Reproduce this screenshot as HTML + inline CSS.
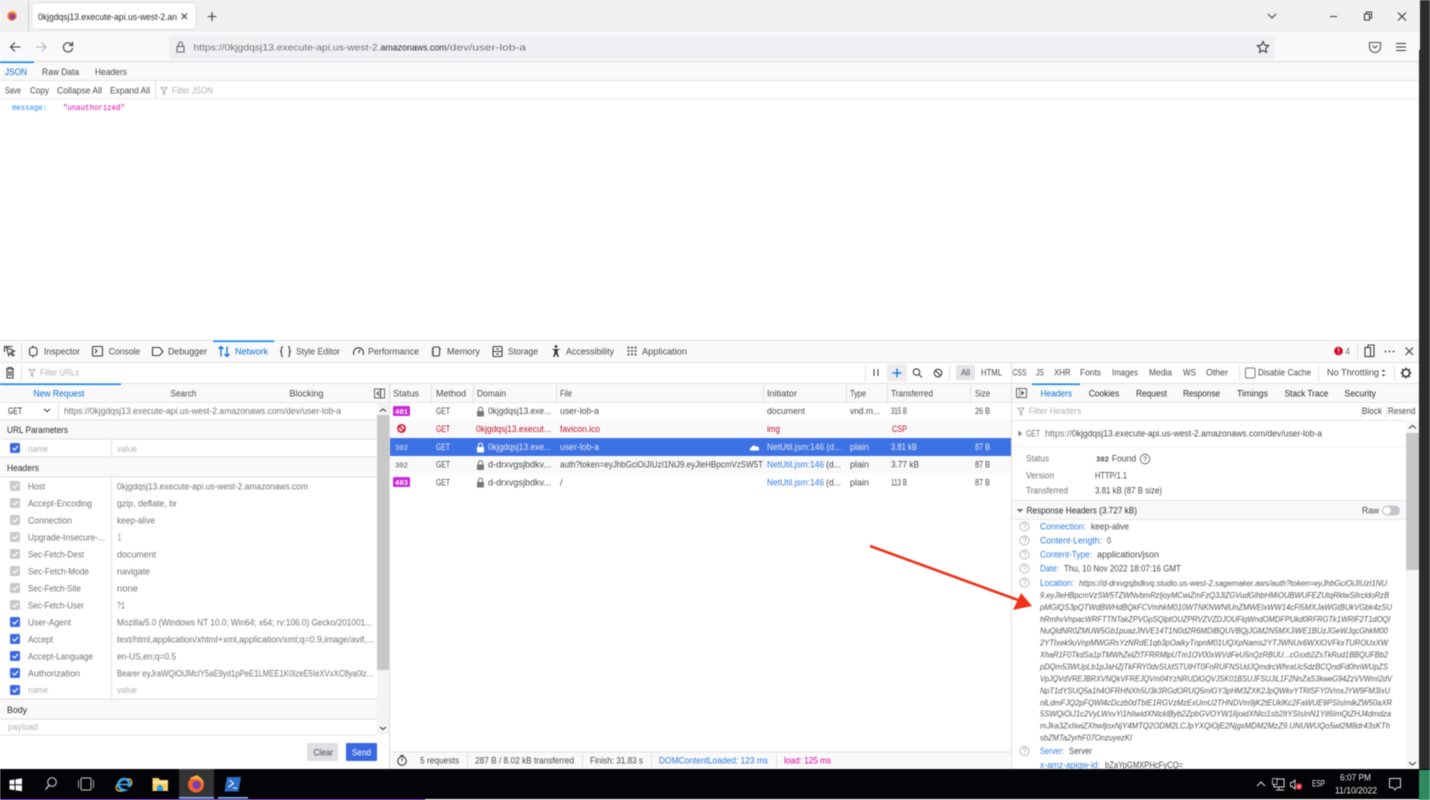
<!DOCTYPE html>
<html><head><meta charset="utf-8"><title>0kjgdqsj13.execute-api.us-west-2.amazonaws.com</title>
<style>
html,body{margin:0;padding:0;background:#fff;width:1430px;height:800px;overflow:hidden}
svg{display:block;position:absolute;left:0;top:0;filter:blur(.4px)}
text{font-family:"Liberation Sans",sans-serif;font-size:9px;fill:#4a4a4f;white-space:pre}
.m{font-family:"Liberation Mono",monospace;font-size:8.5px}
.d{fill:#2b2b30}.g{fill:#737373}.p{fill:#b1b1b3}.b{fill:#2f7de0}.r{fill:#c4132a}.w{fill:#fff}.k{fill:#e8e8e8}
.i{font-style:italic;fill:#55555a;font-size:8.6px}
.s{stroke:#3c3c40;stroke-width:1.1;fill:none}
.l{stroke:#e0e0e2;stroke-width:1;fill:none}
</style></head><body>
<svg width="1430" height="800" viewBox="0 0 1430 800" xmlns="http://www.w3.org/2000/svg">
<rect width="1430" height="800" fill="#fff"/>
<!-- tab bar -->
<rect width="1420" height="32" fill="#f0f0f0"/>
<circle cx="12" cy="16" r="4.6" fill="#f0642c"/><circle cx="12.4" cy="16.6" r="2.5" fill="#7a3fb5"/><path d="M10 12c2-2 5-1 6 1l-3 0z" fill="#fbb32e"/>
<path d="M28.5 0v32" stroke="#cfcfcf"/>
<rect x="32" y="3" width="164" height="26" rx="3" fill="#fff" stroke="#dcdcdc" stroke-width=".7"/>
<text x="38" y="20" textLength="139" class="d">0kjgdqsj13.execute-api.us-west-2.an</text>
<path d="M181.500 13.500l5.500 5.500m0-5.500l-5.500 5.500M212 12v9m-4.500-4.500h9" class="s"/>
<path d="M1268 14l4 4 4-4M1330 16.500h7M1398 12.500l8 8m0-8l-8 8" class="s" stroke-width=".9"/>
<path d="M1364.500 14h5v6h-5zM1366.500 14v-2h5v6h-2" class="s"/>
<!-- nav bar -->
<rect y="32" width="1420" height="29" fill="#f9f9fb"/>
<rect y="61" width="1420" height="1" fill="#dcdcde"/>
<path d="M10.500 47h10M15 42.500l-4.500 4.500 4.500 4.500" class="s"/>
<path d="M36 47h10M41.500 42.500l4.500 4.500-4.500 4.500" class="s" style="stroke:#b4b4b8"/>
<path d="M72 45a4.600 4.600 0 1 0 .6 3M72.600 41.800v3.600h-3.600" class="s"/>
<rect x="169" y="35" width="1106" height="24" rx="3" fill="#f0f0f4"/>
<path d="M177 46.500h7v5.500h-7zM178.500 46.500v-2.500a2 2 0 0 1 4 0v2.500" class="s" style="stroke:#66666a"/>
<text x="193.500" y="50.500" textLength="187" class="g">https://0kjgdqsj13.execute-api.us-west-2.</text>
<text x="380.500" y="50.500" textLength="66" class="d">amazonaws.com</text>
<text x="446.500" y="50.500" textLength="79.500" class="g">/dev/user-lob-a</text>
<path d="M1263 41.500l1.700 3.700 4 .5-3 2.700.8 4-3.500-2-3.500 2 .8-4-3-2.700 4-.5z" class="s"/>
<path d="M1369.500 42.500h11v4.500a5.500 5.500 0 0 1-11 0z" class="s" style="stroke:#555"/><path d="M1372.500 45.500l2.500 2.500 2.500-2.500" class="s" style="stroke:#555"/>
<path d="M1396 43.500h10M1396 47h10M1396 50.500h10" class="s"/>
<!-- json tabs -->
<rect y="62" width="1420" height="18" fill="#f9f9fa"/>
<rect y="61.500" width="34" height="1.500" fill="#0a84ff"/>
<rect y="80" width="1420" height="1" fill="#e4e4e6"/>
<text x="5" y="75" textLength="22" style="fill:#0a6fd8">JSON</text>
<text x="42" y="75" textLength="37">Raw Data</text>
<text x="95" y="75" textLength="32">Headers</text>
<text x="5" y="93.500" textLength="16">Save</text>
<text x="30" y="93.500" textLength="19">Copy</text>
<text x="57" y="93.500" textLength="45">Collapse All</text>
<text x="110" y="93.500" textLength="40">Expand All</text>
<path d="M155.500 81v17" class="l"/>
<path d="M161 87.500h6l-2.200 3v4l-1.600-1v-3z" class="s" style="stroke:#9a9a9e;stroke-width:.8"/>
<text x="172" y="93.500" textLength="41" class="p">Filter JSON</text>
<rect y="98" width="1420" height="1.300" fill="#ededf0"/>
<text x="12" y="110" textLength="35" class="m" style="fill:#1f8bf0">message:</text>
<text x="63" y="110" textLength="62" class="m" style="fill:#dd00a9">"unauthorized"</text>
<!-- right dark strip -->
<rect x="1420" width="10" height="770" fill="#2c2c2c"/><rect x="1419" y="50" width="1" height="720" fill="#2c2c2c"/>
<!-- devtools top -->
<rect y="340" width="1419" height="1" fill="#e0e0e2"/>
<rect y="341" width="1419" height="21" fill="#f9f9fa"/>
<rect y="362" width="1419" height="1" fill="#e0e0e2"/>
<rect y="383" width="1419" height="1" fill="#e0e0e2"/>
<rect y="384" width="1419" height="18" fill="#f9f9fa"/>
<rect y="402" width="1419" height="1" fill="#e6e6e8"/>
<rect x="213" y="340.500" width="61" height="1.500" fill="#0a84ff"/>
<path d="M4.500 352v-5.500h8M6.500 347.500l8 3.500-3 1 2.500 3-1.300 1-2.500-3-1.500 2.500z" class="s"/>
<path d="M21.500 343v17" class="l"/>
<rect x="29.500" y="347.500" width="7.500" height="8" rx="2" class="s"/><path d="M33 345.500v2M33 355.500v2" class="s"/>
<text x="44" y="354.700" textLength="36">Inspector</text>
<rect x="92.500" y="346.500" width="10" height="9.500" rx="1" class="s"/><path d="M95 349l2 2-2 2" class="s" stroke-width=".8"/>
<text x="108.700" y="354.700" textLength="31.500">Console</text>
<path d="M152.500 347.500h7l3.500 4-3.500 4h-7z" class="s"/>
<text x="168" y="354.700" textLength="39">Debugger</text>
<path d="M221 356.500v-10M218.500 349l2.500-2.500 2.500 2.500M227 346.500v10M224.500 354l2.500 2.500 2.500-2.500" class="s" style="stroke:#0a6fd8;stroke-width:1.300"/>
<text x="235" y="354.700" textLength="33" style="fill:#0a6fd8">Network</text>
<path d="M283 346.500c-1.500 0-1.500 1-1.500 2v1.500c0 1-.5 1.500-1.500 1.500 1 0 1.500.5 1.500 1.500v1.500c0 1 0 2 1.500 2M288 346.500c1.500 0 1.500 1 1.500 2v1.500c0 1 .5 1.500 1.500 1.500-1 0-1.500.5-1.500 1.500v1.500c0 1 0 2-1.500 2" class="s" stroke-width="1.200"/>
<text x="296" y="354.700" textLength="44">Style Editor</text>
<path d="M354 355a5 5 0 1 1 9 0M358.500 353l1.500-3.500" class="s" stroke-width="1.200"/>
<text x="368" y="354.700" textLength="51">Performance</text>
<rect x="433" y="347" width="6.500" height="9" rx="1.500" class="s"/><path d="M431.500 349h1.500M431.500 352h1.500M431.500 355h1.500M439.500 349h1.500" class="s" stroke-width=".8"/>
<text x="447" y="354.700" textLength="33">Memory</text>
<rect x="493" y="346.500" width="9" height="10" rx="1" class="s"/><path d="M493 351.500h9M496 349h3M496 354h3" class="s" stroke-width=".8"/>
<text x="508" y="354.700" textLength="30">Storage</text>
<circle cx="556" cy="346.500" r="1.400" fill="#333"/><path d="M551.500 349h9l-3 1.500v2l1.500 4.500h-1.500l-1.500-3.500-1.500 3.500h-1.500l1.500-4.500v-2z" fill="#333"/>
<text x="566" y="354.700" textLength="48">Accessibility</text>
<path d="M627.500 347.500h2M631 347.500h2M634.500 347.500h2M627.500 351h2M631 351h2M634.500 351h2M627.500 354.500h2M631 354.500h2M634.500 354.500h2" stroke="#666" stroke-width="2" fill="none"/>
<text x="642" y="354.700" textLength="45">Application</text>
<circle cx="1338.500" cy="351" r="4.300" fill="#d70022"/><rect x="1338" y="348" width="1.100" height="3.500" fill="#fff"/><rect x="1338" y="352.300" width="1.100" height="1.100" fill="#fff"/>
<text x="1345" y="354.500" textLength="5" class="g">4</text>
<path d="M1357.500 344v15" class="l"/>
<rect x="1365" y="347.500" width="5.500" height="9" class="s"/><path d="M1368 347.500v-2.500h6v11.500h-3.500" class="s"/>
<circle cx="1385.500" cy="351.500" r=".9" fill="#333"/><circle cx="1389.500" cy="351.500" r=".9" fill="#333"/><circle cx="1393.500" cy="351.500" r=".9" fill="#333"/>
<path d="M1405.500 347.500l7.500 7.500m0-7.500l-7.500 7.500" class="s"/>
<!-- toolbar 2 -->
<path d="M6 369h8M8 369v-1.500h4v1.500M7 369.500v8.500h6v-8.500M9 371v5M11 371v5" class="s"/>
<path d="M21.500 365v16" class="l"/>
<path d="M29 369.500h6l-2.200 3v4l-1.600-1v-3z" class="s" style="stroke:#9a9a9e;stroke-width:.8"/>
<text x="40" y="375.500" textLength="39" class="p">Filter URLs</text>
<path d="M865.500 365v16M949.500 365v16" class="l"/>
<path d="M874 369v7M878 369v7" class="s" stroke-width=".8"/>
<rect x="887" y="364" width="20" height="17" fill="#ededf0"/>
<path d="M897 368.500v9M892.500 373h9" style="stroke:#0a6fd8;stroke-width:1.300;fill:none"/>
<circle cx="916.500" cy="372" r="3.200" class="s" stroke-width="1.300"/><path d="M919 374.500l3 3" class="s" stroke-width="1.300"/>
<circle cx="938" cy="373" r="3.800" class="s" stroke-width="1.200"/><path d="M935.500 370.500l5 5" class="s"/>
<rect x="956" y="365" width="19" height="15" fill="#e4e4e6"/>
<text x="961" y="375.700" textLength="9">All</text>
<text x="981" y="375.700" textLength="21">HTML</text>
<text x="1012.500" y="375.700" textLength="14">CSS</text>
<text x="1036" y="375.700" textLength="8">JS</text>
<text x="1054" y="375.700" textLength="16.500">XHR</text>
<text x="1080" y="375.700" textLength="21">Fonts</text>
<text x="1112" y="375.700" textLength="26">Images</text>
<text x="1149" y="375.700" textLength="23">Media</text>
<text x="1183" y="375.700" textLength="13">WS</text>
<text x="1206" y="375.700" textLength="22">Other</text>
<path d="M1239.500 365v16M1318.500 365v16M1394.500 365v16" class="l"/>
<rect x="1245.500" y="368" width="9.500" height="10" rx="1.500" fill="#fff" stroke="#77777c"/>
<text x="1258" y="375.700" textLength="53">Disable Cache</text>
<text x="1327" y="375.700" textLength="52">No Throttling</text>
<path d="M1381.500 371.500l2-2 2 2zM1381.500 374.500l2 2 2-2z" fill="#444"/>
<circle cx="1406" cy="373" r="3.600" fill="none" stroke="#333" stroke-width="1.500"/><path d="M1406 367.500v2M1406 376.500v2M1400.500 373h2M1409.500 373h2M1402 369l1.500 1.500M1408.500 375.500l1.500 1.500M1410 369l-1.500 1.500M1403.500 375.500l-1.500 1.500" stroke="#333" stroke-width="1.300" fill="none"/>
<!-- left panel -->
<rect y="383.500" width="121" height="1.500" fill="#0a84ff"/>
<text x="33.500" y="396.500" textLength="51" style="fill:#0a6fd8">New Request</text>
<text x="170.500" y="396.500" textLength="26">Search</text>
<text x="289.500" y="396.500" textLength="34">Blocking</text>
<rect x="374.500" y="389" width="10" height="9" fill="none" stroke="#555" stroke-width=".9"/><path d="M380.500 389v9M379 391.500l-2 2 2 2" class="s" stroke-width=".8"/>
<rect y="403" width="377" height="1" fill="#fff"/>
<text x="8" y="414" textLength="14" class="d">GET</text>
<path d="M44 409l3 2.500 3-2.500" class="s" stroke-width="1.200"/>
<path d="M58.500 403v17" class="l"/>
<text x="64" y="414" textLength="277" class="g">https://0kjgdqsj13.execute-api.us-west-2.amazonaws.com/dev/user-lob-a</text>
<rect y="420" width="377" height="19" fill="#f9f9fa"/>
<path d="M111.500 439v18M111.500 477v222" class="l"/>
<rect y="457" width="377" height="20" fill="#f9f9fa"/>
<rect y="699" width="377" height="20" fill="#f9f9fa"/>
<path d="M0 420h377M0 439h377M0 457h377M0 477h377M0 699h377M0 719h377M0 735h377" class="l"/>
<text x="7" y="433" textLength="61" class="d">URL Parameters</text>
<text x="7" y="471" textLength="32" class="d">Headers</text>
<text x="7" y="713" textLength="20" class="d">Body</text>
<text x="8" y="730" textLength="30" class="p">payload</text>
<defs><g id="cb"><rect x="10" y="-5" width="10" height="10" rx="1.500"/><path d="M12.500 0l2 2 3.500-4" stroke="#fff" stroke-width="1.200" fill="none"/></g></defs>
<g fill="#3b68e0"><use href="#cb" y="448"/><use href="#cb" y="622"/><use href="#cb" y="639"/><use href="#cb" y="656"/><use href="#cb" y="673"/><use href="#cb" y="690"/></g>
<g fill="#c9c9cc"><use href="#cb" y="486"/><use href="#cb" y="503"/><use href="#cb" y="520"/><use href="#cb" y="537"/><use href="#cb" y="554"/><use href="#cb" y="571"/><use href="#cb" y="588"/><use href="#cb" y="605"/></g>
<text x="28" y="452" textLength="20" class="p">name</text><text x="117" y="452" textLength="20" class="p">value</text>
<text x="28" y="693" textLength="20" class="p">name</text><text x="117" y="693" textLength="20" class="p">value</text>
<g class="lab">
<text x="28" y="489.500" textLength="17" class="g">Host</text><text x="117" y="489.500" textLength="191" class="g">0kjgdqsj13.execute-api.us-west-2.amazonaws.com</text>
<text x="28" y="506.500" textLength="64" class="g">Accept-Encoding</text><text x="117" y="506.500" textLength="60" class="g">gzip, deflate, br</text>
<text x="28" y="523.500" textLength="44" class="g">Connection</text><text x="117" y="523.500" textLength="38" class="g">keep-alive</text>
<text x="28" y="540.500" textLength="77" class="g">Upgrade-Insecure-...</text><text x="118" y="540.500" textLength="3" class="g">1</text>
<text x="28" y="557.500" textLength="56" class="g">Sec-Fetch-Dest</text><text x="117" y="557.500" textLength="39" class="g">document</text>
<text x="28" y="574.500" textLength="61" class="g">Sec-Fetch-Mode</text><text x="117" y="574.500" textLength="33" class="g">navigate</text>
<text x="28" y="591.500" textLength="53" class="g">Sec-Fetch-Site</text><text x="117" y="591.500" textLength="21" class="g">none</text>
<text x="28" y="608.500" textLength="56" class="g">Sec-Fetch-User</text><text x="117" y="608.500" textLength="8" class="g">?1</text>
<text x="28" y="625.500" textLength="43" class="g">User-Agent</text><text x="117" y="625.500" textLength="255" class="g">Mozilla/5.0 (Windows NT 10.0; Win64; x64; rv:106.0) Gecko/201001...</text>
<text x="28" y="642.500" textLength="25" class="g">Accept</text><text x="117" y="642.500" textLength="257" class="g">text/html,application/xhtml+xml,application/xml;q=0.9,image/avif,...</text>
<text x="28" y="659.500" textLength="65" class="g">Accept-Language</text><text x="117" y="659.500" textLength="59" class="g">en-US,en;q=0.5</text>
<text x="28" y="676.500" textLength="52" class="g">Authorization</text><text x="117" y="676.500" textLength="256" class="g">Bearer eyJraWQiOiJMclY5aE9yd1pPeE1LMEE1K0IzeE5IeXVxXC8ya0lz...</text>
</g>
<rect x="377" y="403" width="12" height="332" fill="#f4f4f4"/>
<rect x="377" y="415" width="12" height="255" fill="#c8c8c8"/>
<path d="M380 411.500l3-2.500 3 2.500M380 727l3 2.500 3-2.500" class="s" stroke-width="1.100"/>
<rect x="307" y="743" width="31" height="18" rx="1" fill="#e0e0e2"/>
<text x="313.500" y="755.500" textLength="19.500">Clear</text>
<rect x="346" y="743" width="31" height="18" rx="1" fill="#3b68e0"/>
<text x="352" y="755.500" textLength="19" class="w">Send</text>
<path d="M389.500 384v385" stroke="#dcdcde" fill="none"/>
<!-- network table -->
<path d="M431.500 385v17M473.500 385v17M556.500 385v17M763.500 385v17M846.500 385v17M887.500 385v17M970.500 385v17M1011.500 363v406" class="l"/>
<text x="393" y="396.500" textLength="26">Status</text><text x="436" y="396.500" textLength="30">Method</text><text x="477" y="396.500" textLength="29">Domain</text><text x="560" y="396.500" textLength="12">File</text><text x="767" y="396.500" textLength="30">Initiator</text><text x="850" y="396.500" textLength="16">Type</text><text x="891" y="396.500" textLength="42">Transferred</text><text x="975" y="396.500" textLength="15">Size</text>
<rect x="390" y="420" width="621" height="18" fill="#f9f9fa"/>
<rect x="390" y="456" width="621" height="17.500" fill="#f9f9fa"/>
<rect x="390" y="438" width="621" height="18" fill="#3d72e5"/>
<!-- row 1 -->
<rect x="393" y="406" width="17" height="10" rx="1.500" fill="#c926d9"/><text x="395" y="414" textLength="13" class="m w" style="font-size:7.500px;font-weight:bold">401</text>
<text x="436" y="414" textLength="14">GET</text>
<g id="lk"><rect x="477" y="411" width="7" height="5.500" rx=".7" fill="#77777c"/><path d="M478.500 411v-1.800a2 2 0 0 1 4 0v1.800" fill="none" stroke="#77777c"/></g>
<text x="488" y="414" textLength="63">0kjgdqsj13.exe...</text>
<text x="560" y="414" textLength="39">user-lob-a</text><text x="767" y="414" textLength="38">document</text><text x="850" y="414" textLength="30">vnd.m...</text><text x="891" y="414" textLength="16">315 B</text><text x="975" y="414" textLength="15">26 B</text>
<!-- row 2 -->
<circle cx="401.500" cy="428.500" r="3.600" fill="none" stroke="#d70022" stroke-width="1.500"/><path d="M399 426l5 5" stroke="#d70022" stroke-width="1.500"/>
<text x="436" y="432" textLength="14" class="r">GET</text>
<text x="476" y="432" textLength="75" class="r">0kjgdqsj13.execut...</text>
<text x="560" y="432" textLength="40" class="r">favicon.ico</text>
<text x="767" y="432" textLength="13" class="r">img</text><text x="892" y="432" textLength="15" class="r">CSP</text>
<!-- row 3 -->
<text x="395" y="450" textLength="13" class="m k" style="font-size:7.500px">302</text>
<text x="436" y="450" textLength="14" class="k">GET</text>
<rect x="477" y="447" width="7" height="5.500" rx=".7" fill="#fff"/><path d="M478.500 447v-1.800a2 2 0 0 1 4 0v1.800" fill="none" stroke="#fff"/>
<text x="488" y="450" textLength="63" class="k">0kjgdqsj13.exe...</text>
<text x="560" y="450" textLength="39" class="k">user-lob-a</text>
<path d="M751 450.500a1.500 1.500 0 0 1 .5-3 2.500 2.500 0 0 1 4.500-.8 2 2 0 0 1 3 2v1.800z" fill="#fff"/>
<text x="767" y="450" textLength="74" class="k">NetUtil.jsm:146 (d...</text><text x="850" y="450" textLength="19" class="k">plain</text><text x="891" y="450" textLength="26" class="k">3.81 kB</text><text x="975" y="450" textLength="15" class="k">87 B</text>
<!-- row 4 -->
<text x="395" y="467.500" textLength="13" class="m" style="font-size:7.500px">302</text>
<text x="436" y="467.500" textLength="14">GET</text>
<rect x="477" y="464.500" width="7" height="5.500" rx=".7" fill="#77777c"/><path d="M478.500 464.500v-1.800a2 2 0 0 1 4 0v1.800" fill="none" stroke="#77777c"/>
<text x="488" y="467.500" textLength="63">d-drxvgsjbdkv...</text>
<text x="560" y="467.500" textLength="203">auth?token=eyJhbGciOiJIUzI1NiJ9.eyJleHBpcmVzSW5T</text>
<text x="767" y="467.500" textLength="57" class="b">NetUtil.jsm:146</text><text x="826" y="467.500" textLength="15">(d...</text><text x="850" y="467.500" textLength="19">plain</text><text x="891" y="467.500" textLength="28">3.77 kB</text><text x="975" y="467.500" textLength="15">87 B</text>
<!-- row 5 -->
<rect x="393" y="477" width="17" height="10" rx="1.500" fill="#c926d9"/><text x="395" y="485" textLength="13" class="m w" style="font-size:7.500px;font-weight:bold">403</text>
<text x="436" y="485.300" textLength="14">GET</text>
<rect x="477" y="482" width="7" height="5.500" rx=".7" fill="#77777c"/><path d="M478.500 482v-1.800a2 2 0 0 1 4 0v1.800" fill="none" stroke="#77777c"/>
<text x="488" y="485.300" textLength="63">d-drxvgsjbdkv...</text>
<text x="560" y="485.300">/</text>
<text x="767" y="485.300" textLength="57" class="b">NetUtil.jsm:146</text><text x="826" y="485.300" textLength="15">(d...</text><text x="850" y="485.300" textLength="19">plain</text><text x="891" y="485.300" textLength="16">113 B</text><text x="975" y="485.300" textLength="15">87 B</text>
<!-- status bar -->
<rect x="390" y="752" width="621" height="17" fill="#f9f9fa"/>
<rect x="390" y="751.500" width="621" height="1" fill="#e0e0e2"/>
<circle cx="402" cy="761" r="4.300" class="s" stroke-width="1.300"/><path d="M402 761v-2.500M400 755.500h4" class="s"/>
<text x="420" y="763.700" textLength="39">5 requests</text>
<text x="475" y="763.700" textLength="99">287 B / 8.02 kB transferred</text>
<text x="590" y="763.700" textLength="53">Finish: 31.83 s</text>
<text x="659" y="763.700" textLength="109" class="b">DOMContentLoaded: 123 ms</text>
<text x="784" y="763.700" textLength="47" style="fill:#dd00a9">load: 125 ms</text>
<path d="M467.500 754v13M582.500 754v13M651.500 754v13M776.500 754v13" class="l"/>
<!-- right panel -->
<rect x="1032" y="383.500" width="48" height="1.500" fill="#0a84ff"/>
<rect x="1016.500" y="388.500" width="10" height="9" fill="none" stroke="#555" stroke-width=".9"/><path d="M1019.500 388.500v9M1021.500 391l2.500 2-2.500 2z" fill="#555" stroke="#555" stroke-width=".6"/>
<text x="1040.500" y="396.500" textLength="31.500" style="fill:#0a6fd8">Headers</text>
<text x="1088.700" y="396.500" textLength="30.500" class="d">Cookies</text><text x="1136" y="396.500" textLength="31" class="d">Request</text><text x="1183" y="396.500" textLength="37" class="d">Response</text><text x="1237" y="396.500" textLength="31" class="d">Timings</text><text x="1284.700" y="396.500" textLength="43.500" class="d">Stack Trace</text><text x="1344.500" y="396.500" textLength="31.500" class="d">Security</text>
<path d="M1018 408h6l-2.200 3v4l-1.600-1v-3z" class="s" style="stroke:#9a9a9e;stroke-width:.8"/>
<text x="1028.700" y="414" textLength="52.500" class="p">Filter Headers</text>
<path d="M1361.500 405v13M1386.500 405v13" class="l"/>
<text x="1362" y="414" textLength="20">Block</text><text x="1388" y="414" textLength="27.500">Resend</text>
<rect x="1012" y="420" width="394" height="1" fill="#e6e6e8"/>
<path d="M1018.500 430.500l3.500 3-3.500 3z" fill="#77777c"/>
<text x="1026" y="436.500" textLength="14" class="g">GET</text>
<text x="1045" y="436.500" textLength="27" class="g">https://</text>
<text x="1072" y="436.500" textLength="250">0kjgdqsj13.execute-api.us-west-2.amazonaws.com/dev/user-lob-a</text>
<rect x="1012" y="446.300" width="394" height="1" fill="#ededf0"/>
<text x="1026" y="461.500" textLength="23" class="g">Status</text>
<text x="1096" y="461.500" textLength="13" class="m" style="font-size:7.500px;font-weight:bold">302</text>
<text x="1111.700" y="461.500" textLength="24.500">Found</text>
<circle cx="1145" cy="459" r="4.800" fill="none" stroke="#555" stroke-width=".8"/><text x="1143" y="461.500" style="font-size:7px">?</text>
<text x="1026" y="478.500" textLength="28" class="g">Version</text><text x="1095" y="478.500" textLength="32">HTTP/1.1</text>
<text x="1026" y="493.500" textLength="42" class="g">Transferred</text><text x="1095" y="493.500" textLength="67">3.81 kB (87 B size)</text>
<rect x="1012" y="500" width="394" height="19.500" fill="#f9f9fa"/>
<rect x="1012" y="500" width="394" height="1" fill="#e6e6e8"/><rect x="1012" y="519" width="394" height="1" fill="#e6e6e8"/>
<path d="M1016.500 509l3.500 3.500 3.500-3.500z" fill="#77777c"/>
<text x="1026.500" y="513.700" textLength="110.500" class="d">Response Headers (3.727 kB)</text>
<text x="1362" y="513.500" textLength="17">Raw</text>
<rect x="1382" y="505.500" width="18" height="10" rx="5" fill="#c6c6ca"/><circle cx="1387" cy="510.500" r="3.800" fill="#fff"/>
<defs><g id="q"><circle cx="1024.500" cy="0" r="4.600" fill="none" stroke="#aaa" stroke-width=".8"/><path d="M1022.800-1.500a1.700 1.500 0 1 1 2.500 1.300c-.6.400-.8.600-.8 1.300M1024.500 2v.8" fill="none" stroke="#aaa" stroke-width=".7"/></g></defs>
<use href="#q" y="526.500"/><use href="#q" y="540.500"/><use href="#q" y="554.500"/><use href="#q" y="568.500"/><use href="#q" y="582.500"/><use href="#q" y="751"/>
<text x="1040" y="529.500" textLength="46" class="b">Connection:</text><text x="1091" y="529.500" textLength="38">keep-alive</text>
<text x="1040" y="543.500" textLength="62" class="b">Content-Length:</text><text x="1107" y="543.500" textLength="4">0</text>
<text x="1040" y="557.500" textLength="52" class="b">Content-Type:</text><text x="1097" y="557.500" textLength="62">application/json</text>
<text x="1040" y="571.500" textLength="19" class="b">Date:</text><text x="1064" y="571.500" textLength="117">Thu, 10 Nov 2022 18:07:16 GMT</text>
<text x="1040" y="586" textLength="34" class="b">Location:</text>
<text x="1079" y="586" textLength="308" class="i">https://d-drxvgsjbdkvq.studio.us-west-2.sagemaker.aws/auth?token=eyJhbGciOiJIUzI1NU</text>
<text x="1040" y="598" textLength="349" class="i">9.eyJleHBpcmVzSW5TZWNvbmRzIjoyMCwiZmFzQ3JlZGVudGlhbHMiOUBWUFEZUtqRklwSlIrcldoRzB</text>
<text x="1040" y="610" textLength="352" class="i">pMGlQS3pQTWdBWHdBQkFCVmhkM010WTNKNWNlUnZMWElxWW14cFl5MXJaWGtBUkVGbk4zSU</text>
<text x="1040" y="622" textLength="350" class="i">hRmhvVnpacWRFTTNTakZPVGpSQlptOUZPRVZVZDJOUFlqWndOMDFPUkd0RFRGTk1WRlF2T1dOQl</text>
<text x="1040" y="633.500" textLength="348" class="i">NuQldNR0ZMUW5Gb1puazJNVE14T1N0d2R6MDlBQUVBQjJGM2N5MXJiWE1BUzJGeWJqcGhkM00</text>
<text x="1040" y="645.500" textLength="348" class="i">2YTIxek9uVnpMWGRsYzNRdE1qb3pOalkyTnpnM01UQXpNams2YTJWNUx6WXlOVFkxTUROUxXW</text>
<text x="1040" y="657.500" textLength="348" class="i">XhaR1F0TkdSa1pTMWhZelZtTFRRMlpUTm1OV00xWVdFeU5nQzRBUU...cGsxb2ZsTkRud1BBQUFBb2</text>
<text x="1040" y="669.500" textLength="348" class="i">pDQm53WUpLb1pJaHZjTkFRY0dvSUdSTUlHT0FnRUFNSUdJQmdrcWhraUc5dzBCQndFd0hnWUpZS</text>
<text x="1040" y="681.500" textLength="352" class="i">VpJQVdVREJBRXVNQkVFREJQVm04YzNRUDlGQVJSK01BSUJFSUJiL1F2NnZaS3kweG94ZzVVWmI2dV</text>
<text x="1040" y="693.500" textLength="350" class="i">NpT1dYSUQ5a1h4OFRHNXh5U3k3RGdORUQ5mlGY3pHM3ZXK2JpQWkvYTRlSFY0VmxJYW9FM3IxU</text>
<text x="1040" y="705.500" textLength="352" class="i">nlLdmFJQ2pFQWl4cDczb0dTblE1RGVzMzExUmU2THNDVm9jK2tEUklKc2FaWUE9PSIsImlkZW50aXR</text>
<text x="1040" y="716.500" textLength="351" class="i">5SWQiOiJ1c2VyLWxvYi1hIiwidXNlcklByb2ZpbGVOYW1lIjoidXNlci1sb2ItYSIsInN1YiI6ImQtZHJ4dmdza</text>
<text x="1040" y="728.500" textLength="350" class="i">mJka3ZxIiwiZXhwIjoxNjY4MTQ2ODM2LCJpYXQiOjE2NjgxMDM2MzZ9.UNUWUQo5wl2M8dr43sKTh</text>
<text x="1040" y="740.500" textLength="92" class="i">sbZMTa2yrhF07OnzuyezKI</text>
<text x="1040" y="754" textLength="24" class="b">Server:</text><text x="1069" y="754" textLength="23">Server</text>
<text x="1040" y="768" textLength="60" class="b">x-amz-apigw-id:</text><text x="1105" y="768" textLength="78">bZaYpGMXPHcFyCQ=</text>
<rect x="1406" y="421" width="13" height="348" fill="#f7f7f7"/>
<rect x="1406" y="433" width="13" height="137" fill="#c8c8c8"/>
<path d="M1409 428.500l3.500-3 3.500 3M1409 762l3.500 3 3.500-3" class="s" stroke-width="1.100"/>
<!-- red arrow -->
<path d="M870 546L1018 600" stroke="#f0321a" stroke-width="2.600" fill="none"/>
<path d="M1032 606L1013 610L1021 593z" fill="#f0321a"/>
<!-- taskbar -->
<rect y="769" width="1430" height="30" fill="#040408"/>
<rect y="799" width="425" height="1" fill="#5a0fa0"/><rect x="425" y="799" width="1005" height="1" fill="#e8e8e8"/>
<rect x="1419" y="770" width="11" height="30" fill="#2f8a5f"/>
<path d="M9.500 780.200l5-.7v4.800h-5zM15.500 779.300l6.500-.9v5.900h-6.500zM9.500 785.300h5v4.800l-5-.7zM15.500 785.300h6.500v5.900l-6.500-.9z" fill="#fff"/>
<circle cx="52" cy="782" r="4.300" fill="none" stroke="#ddd" stroke-width="1"/><path d="M49 785.500l-3.500 4" stroke="#ddd" stroke-width="1.200"/>
<rect x="81" y="778" width="10" height="12" rx="1" fill="none" stroke="#ccc"/><path d="M78.500 780v8M93.500 780v8" stroke="#aaa"/>
<ellipse cx="124" cy="785" rx="8.500" ry="5" fill="none" stroke="#f3c33a" stroke-width="1.300" transform="rotate(-30 124 785)"/>
<circle cx="124" cy="784.500" r="5.500" fill="none" stroke="#38a3e8" stroke-width="2.600"/><path d="M119 784.500h10" stroke="#38a3e8" stroke-width="1.700"/><path d="M125 787h6v2.500h-6z" fill="#040408"/>
<path d="M152.500 778h6l1.500 2h8v11h-15.500z" fill="#f4cf67"/><rect x="152.500" y="781" width="15.500" height="2.300" fill="#fae9a9"/><path d="M157 791v-4l3-2.500 3 2.500v4z" fill="#2f9ae0"/>
<rect x="179" y="769" width="35" height="30" fill="#333336"/>
<circle cx="196" cy="784.500" r="8" fill="#f0642c"/><circle cx="196.500" cy="785" r="4.200" fill="#7a3fb5"/><path d="M190 778c3-2 5-1 6-3 3 1 7 4 8 9-2-3-5-5-8-5-2 0-4 0-6-1z" fill="#fbb32e"/>
<rect x="179" y="797" width="35" height="1.700" fill="#76b9ed"/><rect x="218" y="797" width="30" height="1.700" fill="#76b9ed"/>
<path d="M227 777h14l-2.500 14.500h-14z" fill="#2b6fc9"/><path d="M229.500 780l4 3.500-5 3.500" fill="none" stroke="#fff" stroke-width="1.100"/><path d="M233 788h4" stroke="#fff"/>
<path d="M1257 786l4-4 4 4" fill="none" stroke="#ddd" stroke-width="1.100"/>
<rect x="1274" y="779" width="10" height="8" fill="none" stroke="#ddd"/><rect x="1272.500" y="778.500" width="4.500" height="6" fill="#040408" stroke="#ddd" stroke-width=".8"/><path d="M1276 790h8M1279 787v3" stroke="#ddd"/>
<path d="M1290.500 782.500h2l2.500-2.500v9l-2.500-2.500h-2z" fill="none" stroke="#ddd" stroke-width=".9"/>
<circle cx="1299" cy="786.500" r="3.300" fill="#e8202a"/><path d="M1297.500 785l3 3m0-3l-3 3" stroke="#fff" stroke-width=".7"/>
<text x="1312" y="786.500" textLength="13" style="fill:#e8e8e8">ESP</text>
<text x="1340" y="780.500" textLength="31" style="fill:#e8e8e8">6:07 PM</text>
<text x="1335" y="793.500" textLength="42" style="fill:#e8e8e8">11/10/2022</text>
<path d="M1389.500 778.500h11v9h-3.500l-2 2.500-2-2.500h-3.500z" fill="none" stroke="#ddd"/>
</svg>
<script>document.querySelectorAll('text[textLength]').forEach(function(t){t.setAttribute('lengthAdjust','spacingAndGlyphs')});</script>
</body></html>
